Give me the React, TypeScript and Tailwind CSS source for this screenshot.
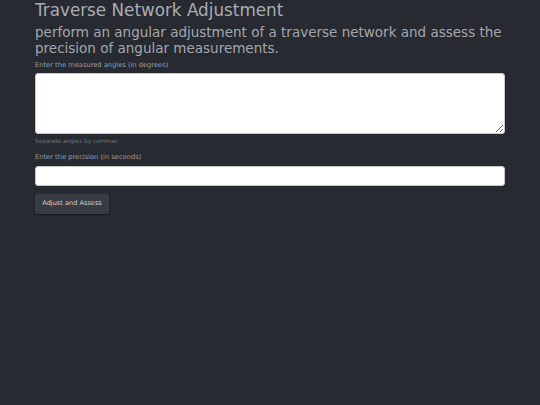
import React from 'react';

const App: React.FC = () => {
    return (
        <div className="min-h-screen w-full bg-[#272a31] text-[#b4b8bf] antialiased" style={{ fontFamily: '"DejaVu Sans", sans-serif' }}>
            <div className="mx-[35px] pt-0">
                <h1 className="text-[16.8px] leading-[21px] text-[#a9adb3]">Traverse Network Adjustment</h1>
                <p className="mt-[3px] text-[13.5px] leading-[16px] text-[#a3a7ad]">
                    perform an angular adjustment of a traverse network and assess the precision of angular measurements.
                </p>

                <label className="mt-[5px] block text-[6.7px] leading-[9px] text-[#9a9ea5]">Enter the measured angles (in degrees)</label>
                <textarea className="mt-[3px] block h-[61px] w-full resize-y rounded-[3px] border border-[#c8c8c8] bg-white" />
                <div className="mt-[3px] text-[5.8px] leading-[8px] text-[#6f737a]">Separate angles by commas</div>

                <label className="mt-[8px] block text-[6.7px] leading-[9px] text-[#9a9ea5]">Enter the precision (in seconds)</label>
                <input type="text" className="mt-[4px] block h-[20px] w-full rounded-[3px] border border-[#c8c8c8] bg-white" />

                <button className="mt-[8px] h-[20px] w-[74px] rounded-[2px] bg-[#383b41] text-[6.6px] text-[#d0d2d5] shadow-[0_1px_2px_rgba(0,0,0,0.5)]">
                    Adjust and Assess
                </button>
            </div>
        </div>
    );
};

export default App;
